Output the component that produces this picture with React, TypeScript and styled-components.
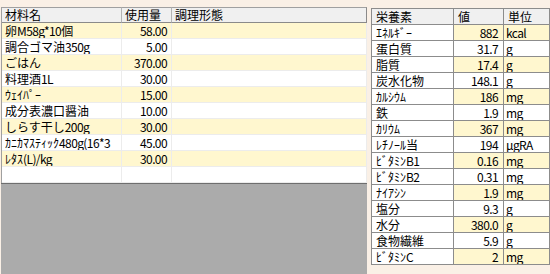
import { Fragment } from 'react';
import styled, { createGlobalStyle } from 'styled-components';

const GlobalStyle = createGlobalStyle`
  html, body {
    margin: 0;
    padding: 0;
    background: #faf0e6;
  }
  body {
    font-family: "Noto Sans CJK JP", "Liberation Sans", sans-serif;
    font-size: 12px;
    color: #000;
  }
`;

const Screen = styled.div`
  width: 550px;
  height: 274px;
  display: flex;
  column-gap: 4px;
  overflow: hidden;
  background: #faf0e6;
`;

const LeftPanel = styled.div`
  width: 366px;
  margin-left: 1px;
  padding-top: 7px;
  display: flex;
  flex-direction: column;
`;

const RecipeGrid = styled.div`
  display: grid;
  grid-template-columns: 120px 50px 1fr;
  background: #fff;
  border-left: 1px solid #a0a0a0;
`;

const HeadCell = styled.div<{ $last?: boolean }>`
  height: 14px;
  line-height: 14px;
  padding: 0 3px;
  background: #f0f0f0;
  border-top: 1px solid #a0a0a0;
  border-bottom: 1px solid #8a8a8a;
  border-right: 1px solid ${(p) => (p.$last ? '#8a8a8a' : '#b4b4b4')};
  white-space: nowrap;
  overflow: hidden;
`;

const Cell = styled.div<{ $odd: boolean; $num?: boolean }>`
  height: 15px;
  line-height: 15px;
  padding: 0 4px 0 3px;
  background: ${(p) => (p.$odd ? '#fff7cf' : '#fff')};
  border-bottom: 1px solid #ececec;
  border-right: 1px solid #ececec;
  text-align: ${(p) => (p.$num ? 'right' : 'left')};
  letter-spacing: ${(p) => (p.$num ? '-0.6px' : 'normal')};
  white-space: nowrap;
  overflow: hidden;
`;

const EmptyArea = styled.div`
  flex: 1;
  background: #ababab;
  border-top: 1px solid #6e6e6e;
`;

const NutrientGrid = styled.div`
  margin-top: 8px;
  align-self: flex-start;
  display: grid;
  grid-template-columns: 81px 49px 45px;
  grid-auto-rows: 15px;
  gap: 1px;
  padding: 1px;
  background: #8c8c8c;
`;

const NHead = styled.div`
  line-height: 15px;
  padding: 0 4px;
  background: #f0f0f0;
  white-space: nowrap;
`;

const NName = styled.div`
  line-height: 15px;
  padding: 0 4px;
  background: #fff;
  white-space: nowrap;
  overflow: hidden;
`;

const NValue = styled.div<{ $odd: boolean; $unit?: boolean }>`
  line-height: 15px;
  padding: ${(p) => (p.$unit ? '0 2px' : '0 5px 0 2px')};
  background: ${(p) => (p.$odd ? '#fff7cf' : '#fff')};
  text-align: ${(p) => (p.$unit ? 'left' : 'right')};
  letter-spacing: -0.6px;
  white-space: nowrap;
  overflow: hidden;
`;

const NarrowLatin = styled.span`
  letter-spacing: -0.6px;
`;

function Label({ text }: { text: string }) {
  const parts = text.split(/([\x21-\x7E]+)/);
  return (
    <>
      {parts.map((part, i) =>
        /[\x21-\x7E]/.test(part) ? (
          <NarrowLatin key={i}>{part}</NarrowLatin>
        ) : (
          <Fragment key={i}>{part}</Fragment>
        )
      )}
    </>
  );
}

const ingredients: [string, string][] = [
  ['卵M58g*10個', '58.00'],
  ['調合ゴマ油350g', '5.00'],
  ['ごはん', '370.00'],
  ['料理酒1L', '30.00'],
  ['ｳｪｲﾊﾟｰ', '15.00'],
  ['成分表濃口醤油', '10.00'],
  ['しらす干し200g', '30.00'],
  ['ｶﾆｶﾏｽﾃｨｯｸ480g(16*3', '45.00'],
  ['ﾚﾀｽ(L)/kg', '30.00'],
  ['', ''],
];

const nutrients: [string, string, string][] = [
  ['ｴﾈﾙｷﾞｰ', '882', 'kcal'],
  ['蛋白質', '31.7', 'g'],
  ['脂質', '17.4', 'g'],
  ['炭水化物', '148.1', 'g'],
  ['ｶﾙｼｳﾑ', '186', 'mg'],
  ['鉄', '1.9', 'mg'],
  ['ｶﾘｳﾑ', '367', 'mg'],
  ['ﾚﾁﾉｰﾙ当', '194', 'μgRA'],
  ['ﾋﾞﾀﾐﾝB1', '0.16', 'mg'],
  ['ﾋﾞﾀﾐﾝB2', '0.31', 'mg'],
  ['ﾅｲｱｼﾝ', '1.9', 'mg'],
  ['塩分', '9.3', 'g'],
  ['水分', '380.0', 'g'],
  ['食物繊維', '5.9', 'g'],
  ['ﾋﾞﾀﾐﾝC', '2', 'mg'],
];

export default function App() {
  return (
    <>
      <GlobalStyle />
      <Screen>
        <LeftPanel>
          <RecipeGrid>
            <HeadCell>材料名</HeadCell>
            <HeadCell>使用量</HeadCell>
            <HeadCell $last>調理形態</HeadCell>
            {ingredients.map(([name, qty], i) => {
              const odd = i % 2 === 0 && name !== '';
              return (
                <Fragment key={i}>
                  <Cell $odd={odd}>
                    <Label text={name} />
                  </Cell>
                  <Cell $odd={odd} $num>
                    {qty}
                  </Cell>
                  <Cell $odd={odd} />
                </Fragment>
              );
            })}
          </RecipeGrid>
          <EmptyArea />
        </LeftPanel>
        <NutrientGrid>
          <NHead>栄養素</NHead>
          <NHead>値</NHead>
          <NHead>単位</NHead>
          {nutrients.map(([name, value, unit], i) => (
            <Fragment key={i}>
              <NName>
                <Label text={name} />
              </NName>
              <NValue $odd={i % 2 === 0}>{value}</NValue>
              <NValue $odd={i % 2 === 0} $unit>
                {unit}
              </NValue>
            </Fragment>
          ))}
        </NutrientGrid>
      </Screen>
    </>
  );
}
